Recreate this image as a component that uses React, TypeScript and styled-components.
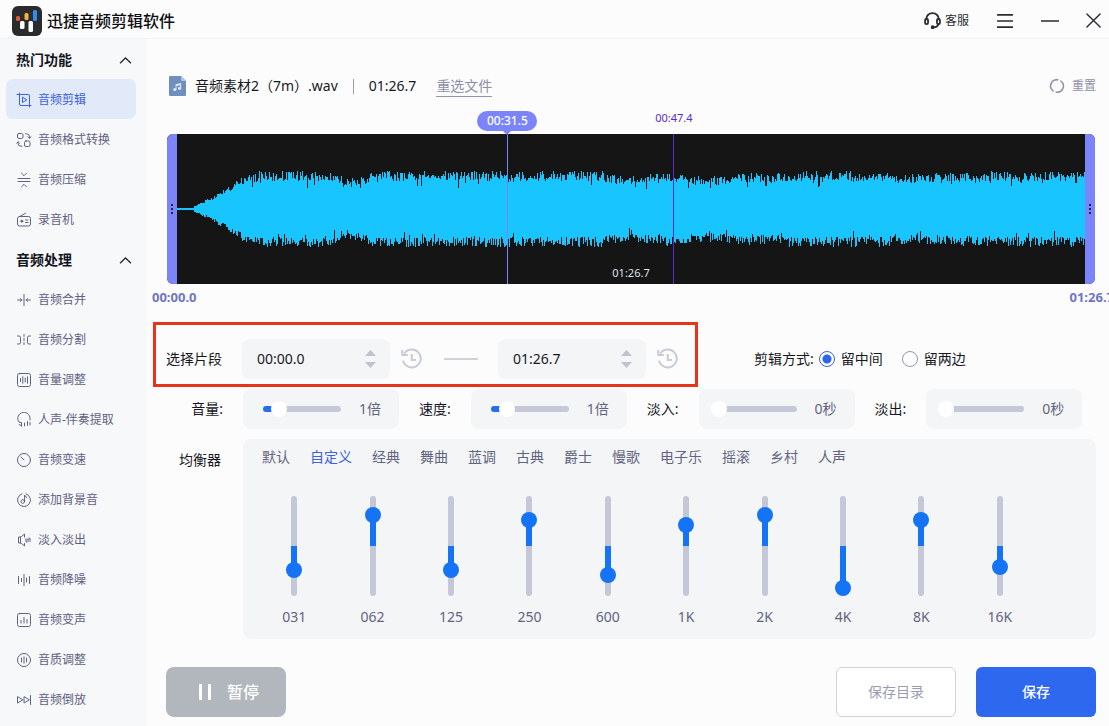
import React, { useState } from "react";
import styled, { createGlobalStyle, css } from "styled-components";

const GlobalStyle = createGlobalStyle`
  *, *::before, *::after { box-sizing: border-box; }
  body {
    margin: 0;
    background: #fcfcfc;
    color: #17181f;
    font-family: "Noto Sans", "Noto Sans CJK SC", sans-serif;
    font-size: 14px;
    line-height: 20px;
  }
  button, input { font: inherit; color: inherit; margin: 0; padding: 0; }
  button { border: 0; background: none; cursor: pointer; }
  h1, h2, ul, p { margin: 0; padding: 0; }
  ul { list-style: none; }
  svg { display: block; flex: none; }
`;

/* ---------- shell ---------- */

const Page = styled.div`
  min-height: 100vh;
  display: flex;
  flex-direction: column;
`;

const TitleBar = styled.header`
  height: 39px;
  padding: 3px 8px 0 12px;
  display: flex;
  align-items: center;
  border-bottom: 1px solid #f3f3f6;
`;

const AppName = styled.h1`
  margin-left: 5px;
  flex: 1;
  font-size: 16px;
  font-weight: 500;
  color: #0c0d12;
`;

const WindowActions = styled.div`
  display: flex;
  align-items: center;
  gap: 27px;
  color: #2a2b33;
`;

const WindowButton = styled.button`
  display: flex;
  align-items: center;
  gap: 4px;
  font-size: 12px;
`;

const Body = styled.div`
  flex: 1;
  display: flex;
`;

const Sidebar = styled.nav`
  width: 146px;
  flex: none;
  padding: 0 10px 0 6px;
  background: #f7f8fa;
`;

const GroupHeader = styled.button`
  width: 100%;
  height: 40px;
  padding: 2px 4px 0 10px;
  display: flex;
  align-items: center;
  justify-content: space-between;
  font-weight: 700;
  color: #14161f;
`;

const NavLink = styled.a<{ $active?: boolean }>`
  height: 40px;
  padding: 1px 0 0 10px;
  display: flex;
  align-items: center;
  gap: 6px;
  border-radius: 7px;
  font-size: 12px;
  text-decoration: none;
  color: ${(p) => (p.$active ? "#3a63dc" : "#5f6183")};
  background: ${(p) => (p.$active ? "#e2e9f8" : "transparent")};
`;

const Main = styled.main`
  flex: 1;
  min-width: 0;
  padding: 36px 13px 9px 20px;
  overflow: hidden;
`;

/* ---------- file row ---------- */

const FileRow = styled.div`
  display: flex;
  align-items: center;
  height: 22px;
  padding-left: 3px;
`;

const FileName = styled.span`
  margin-left: 9px;
`;

const Divider = styled.span`
  width: 1px;
  height: 15px;
  margin: 0 15px;
  background: #9b9cab;
`;

const ReselectLink = styled.a`
  margin-left: 20px;
  border-bottom: 1px solid #9395ad;
  color: #8d8fa9;
  text-decoration: none;
`;

const ResetButton = styled.button`
  margin-left: auto;
  display: flex;
  align-items: center;
  gap: 7px;
  font-size: 12px;
  color: #8f91a8;
`;

/* ---------- waveform ---------- */

const Editor = styled.section`
  margin: 14px 1px 0;
  padding-top: 23px;
  position: relative;
`;

const WaveFrame = styled.div`
  height: 150px;
  display: flex;
  border-radius: 6px;
  overflow: hidden;
  background: #151515;
`;

const TrimHandle = styled.button`
  width: 10px;
  flex: none;
  display: flex;
  flex-direction: column;
  align-items: center;
  justify-content: center;
  gap: 2px;
  background: #7b84f8;
`;

const HandleDot = styled.span`
  width: 2px;
  height: 2px;
  background: #23235a;
`;

const WaveArea = styled.div`
  flex: 1;
  min-width: 0;
`;

const Markers = styled.div`
  position: absolute;
  inset: 0 10px;
  pointer-events: none;
`;

const Marker = styled.div<{ $color: string }>`
  position: absolute;
  top: 0;
  bottom: 0;
  width: 1px;
  display: flex;
  flex-direction: column;
  align-items: center;
  color: ${(p) => p.$color};

  &::after {
    content: "";
    flex: 1;
    width: 1px;
    background: ${(p) => p.$color};
  }
`;

const PlayheadTag = styled.span`
  width: 60px;
  height: 20px;
  flex: none;
  border-radius: 10px;
  background: #7b84f8;
  color: #fff;
  font-size: 12px;
  font-weight: 500;
  text-align: center;
`;

const PlayheadTip = styled.span`
  border: 4px solid transparent;
  border-top-color: #7b84f8;
  border-bottom-width: 0;
`;

const HoverTag = styled.span`
  height: 23px;
  flex: none;
  font-size: 11px;
  line-height: 14px;
`;

const SelectionLength = styled.span`
  position: absolute;
  left: 50%;
  bottom: 2px;
  transform: translateX(-50%);
  font-size: 11px;
  line-height: 18px;
  color: #dfe1ea;
`;

const RangeLabels = styled.div`
  margin: 3px -18px 0 -14px;
  display: flex;
  justify-content: space-between;
  font-size: 13px;
  font-weight: 700;
  color: #6f76c4;
`;

/* ---------- segment row ---------- */

const SegmentRow = styled.div`
  margin-top: 15px;
  display: flex;
  align-items: center;
  gap: 56px;
`;

const SegmentBox = styled.div`
  margin-left: -13px;
  padding: 14px 17px 5px 10px;
  display: flex;
  align-items: center;
  flex: none;
  border: 3px solid #e8341a;
`;

const TimeField = styled.div`
  width: 148px;
  height: 40px;
  padding: 0 14px 0 15px;
  display: flex;
  align-items: center;
  justify-content: space-between;
  border-radius: 8px;
  background: #f4f5f7;
`;

const TimeInput = styled.input`
  width: 80px;
  border: 0;
  outline: 0;
  background: transparent;
`;

const Stepper = styled.div`
  display: flex;
  flex-direction: column;
  gap: 6px;
`;

const SegmentLabel = styled.label`
  margin-right: 20px;
`;

const HistoryButton = styled.button`
  margin-left: 11px;
  color: #c9cbd6;
`;

const Dash = styled.span`
  width: 34px;
  height: 2px;
  margin: 0 20px 0 22px;
  background: #d0d2da;
`;

const ModeGroup = styled.fieldset`
  margin: 0;
  padding: 8px 0 0;
  border: 0;
  display: flex;
  align-items: center;
  white-space: nowrap;
`;

const ModeTitle = styled.span`
  margin-right: 5px;
`;

const RadioLabel = styled.label`
  display: flex;
  align-items: center;
  gap: 6px;
  margin-right: 19px;
`;

const Radio = styled.input`
  appearance: none;
  width: 16px;
  height: 16px;
  border: 1px solid #9496b0;
  border-radius: 50%;
  background: #fff;

  &:checked {
    border-color: #3a63dc;
    background: radial-gradient(circle, #2b66ea 4px, #fff 5px);
  }
`;

/* ---------- sliders ---------- */

const ControlRow = styled.div`
  margin-top: 2px;
  display: flex;
  align-items: center;
  gap: 20px;
`;

const ControlLabel = styled.label<{ $lead?: boolean }>`
  flex: none;
  text-align: right;
  ${(p) => p.$lead && css`width: 57px;`}
`;

const SliderCard = styled.div`
  width: 156px;
  height: 40px;
  padding: 0 18px 0 12px;
  display: flex;
  align-items: center;
  justify-content: space-between;
  border-radius: 8px;
  background: #f4f5f7;
  color: #62647f;
`;

const SliderBox = styled.div`
  width: 86px;
  display: grid;
  align-items: center;

  & > * { grid-area: 1 / 1; }
`;

const Rail = styled.span`
  height: 6px;
  margin-left: 8px;
  border-radius: 3px;
`;

const HRange = styled.input`
  appearance: none;
  width: 100%;
  height: 16px;
  background: transparent;

  &::-webkit-slider-thumb {
    appearance: none;
    width: 16px;
    height: 16px;
    border-radius: 50%;
    background: #fff;
  }
`;

/* ---------- equalizer ---------- */

const EqRow = styled.section`
  margin-top: 10px;
  display: flex;
  gap: 20px;
`;

const EqTitle = styled.h2`
  width: 57px;
  flex: none;
  padding: 11px 2px 0 0;
  font-size: 14px;
  font-weight: 400;
  text-align: right;
`;

const EqPanel = styled.div`
  flex: 1;
  min-width: 0;
  padding: 8px 0 12px;
  border-radius: 8px;
  background: #f4f5f7;
`;

const PresetList = styled.div`
  padding-left: 19px;
  display: flex;
  gap: 20px;
`;

const Preset = styled.button<{ $active: boolean }>`
  flex: none;
  color: ${(p) => (p.$active ? "#3a63dc" : "#62647f")};
`;

const Bands = styled.div`
  margin-top: 29px;
  padding: 0 57px 0 12px;
  display: grid;
  grid-template-columns: repeat(10, 1fr);
`;

const Band = styled.label`
  display: flex;
  flex-direction: column;
  align-items: center;
  gap: 11px;
  color: #62647f;
`;

const BandSlider = styled.div`
  height: 100px;
  width: 16px;
  display: grid;
  justify-items: center;

  & > * { grid-area: 1 / 1; }
`;

const BandRail = styled.span`
  width: 6px;
  border-radius: 3px;
`;

const VRange = styled.input`
  appearance: none;
  writing-mode: vertical-lr;
  direction: rtl;
  width: 16px;
  height: 100px;
  background: transparent;

  &::-webkit-slider-thumb {
    appearance: none;
    width: 16px;
    height: 16px;
    border-radius: 50%;
    background: #1573f5;
  }
`;

/* ---------- footer ---------- */

const Footer = styled.footer`
  margin-top: 28px;
  display: flex;
  gap: 20px;
`;

const ActionButton = styled.button<{ $kind: "pause" | "outline" | "primary" }>`
  width: 120px;
  height: 50px;
  display: flex;
  align-items: center;
  justify-content: center;
  border-radius: 6px;
  ${(p) =>
    p.$kind === "pause" &&
    css`
      margin-right: auto;
      padding-left: 6px;
      gap: 16px;
      border-radius: 8px;
      background: #b2b7bd;
      color: #fff;
      font-size: 16px;
      font-weight: 500;
    `}
  ${(p) =>
    p.$kind === "outline" &&
    css`
      border: 1px solid #d0d2dc;
      background: #fff;
      color: #9a9cb3;
    `}
  ${(p) =>
    p.$kind === "primary" &&
    css`
      background: #2e68ef;
      color: #fff;
      font-weight: 500;
    `}
`;

/* ---------- icons ---------- */

const Icon = ({ children, size = 16, width = 1 }: { children: React.ReactNode; size?: number; width?: number }) => (
  <svg
    width={size}
    height={size}
    viewBox="0 0 16 16"
    fill="none"
    stroke="currentColor"
    strokeWidth={width}
    strokeLinecap="round"
    strokeLinejoin="round"
    aria-hidden="true"
  >
    {children}
  </svg>
);

const icons: Record<string, React.ReactNode> = {
  cut: <path d="M3.5 1v11a1.500 1.500 0 0 0 1.500 1.500H15M1 2.500h11a1.500 1.500 0 0 1 1.500 1.500V15M6.5 5.500v5l4-2.5z" />,
  convert: (
    <>
      <rect x="1.5" y="1.5" width="5.500" height="5" rx="1.5" />
      <rect x="8.5" y="9" width="5.500" height="5.500" rx="1.5" />
      <path d="M9.5 1.800h1a3 3 0 0 1 3 3v1.200M11.900 4.800l1.600 1.400 1.500-1.400M6 14.200H5a3 3 0 0 1-3-3V10M.7 11.200 2 9.800l1.500 1.400" />
    </>
  ),
  compress: <path d="M2 6.500h12M2 9.500h12M5.5 1.200 8 3.700l2.500-2.500M5.5 14.800 8 12.300l2.500 2.500" />,
  recorder: (
    <>
      <rect x="1.5" y="4.500" width="13" height="9.5" rx="2" />
      <path d="M4 4.300 9.500 1.300M9.5 8h2.5M9.5 10.500h2.5" />
      <circle cx="5.8" cy="9.2" r="1" fill="currentColor" />
    </>
  ),
  merge: <path d="M8 2.500v11M1.500 8H6M4.200 6.500 5.800 8 4.200 9.500M14.500 8H10M11.800 6.500 10.200 8l1.600 1.500" />,
  split: (
    <>
      <path d="M1.500 4H3a1.500 1.500 0 0 1 1.500 1.500v5A1.500 1.500 0 0 1 3 12H1.500M14.500 4H13a1.500 1.500 0 0 0-1.500 1.500v5A1.500 1.500 0 0 0 13 12h1.500" />
      <path d="M8 2.500v11" strokeDasharray="2 2" />
    </>
  ),
  volume: (
    <>
      <rect x="1.500" y="1.500" width="13" height="13" rx="2" />
      <path d="M4.500 6.500v3M6.800 4.800v6.500M9.200 6v4M11.500 4.800v6.500" />
    </>
  ),
  vocal: <path d="M5.500 14v-3.500L3 10.200A6.200 6.200 0 1 1 14 8M5.500 14 3.200 12.500M8.500 11v3M11.500 9.500v4M14 10.500v2.500" />,
  speed: (
    <>
      <circle cx="8" cy="8" r="6.500" />
      <path d="M8 8 5 5" />
    </>
  ),
  bgm: (
    <>
      <path d="M6 1.800a6.500 6.500 0 1 0 4 0" />
      <circle cx="6.800" cy="9.500" r="1.800" />
      <path d="M8.600 9.500V3q.5 2 2.200 2.500" />
    </>
  ),
  fade: (
    <>
      <path d="M4.500 5H2.500v6h2M4.500 5v6M5.500 4.500 8.500 2v3M5.500 11.500 8.500 14v-2.500" />
      <path d="M9.500 7.200h5L13 5.800M14.500 9h-5l1.500 1.400" />
    </>
  ),
  denoise: <path d="M2.500 4.500v7M5.500 6.500v3M8 2.500v11M10.500 6v4M13.500 4.500v7" />,
  voice: (
    <>
      <rect x="1.500" y="1.500" width="13" height="13" rx="2" />
      <path d="M5 8.500V11M8 5.500V11M11 7.500V11" />
    </>
  ),
  quality: (
    <>
      <circle cx="8" cy="8" r="6.500" />
      <path d="M5.500 6v4M8 4.800v6.400M10.500 6v4" />
    </>
  ),
  reverse: <path d="M1.500 5v6l5-3zM8 5v6l5-3zM14.500 3.500v9" />,
};

const LogoIcon = () => (
  <svg width="30" height="30" viewBox="0 0 30 30" aria-hidden="true">
    <rect width="30" height="30" rx="6" fill="#2b2b2e" />
    <rect x="4" y="10" width="4" height="5" rx="1.500" fill="#e4573d" />
    <rect x="8" y="15" width="4.500" height="8" rx="1.500" fill="#fff" />
    <rect x="12.500" y="7" width="4" height="7" rx="1.500" fill="#f0b23a" />
    <rect x="16.500" y="15" width="4.500" height="11" rx="1.500" fill="#fff" />
    <rect x="21" y="4" width="4" height="11" rx="1.500" fill="#2f8df0" />
  </svg>
);

const HeadsetIcon = () => (
  <Icon size={17} width={1.7}>
    <path d="M2.200 7V6.500a5.800 5.500 0 0 1 11.600 0V7M13.500 11.500c-.4 1.800-2 2.800-4.500 2.800" />
    <rect x="1" y="6.500" width="2.800" height="5" rx="1.300" />
    <rect x="12.200" y="6.500" width="2.800" height="5" rx="1.300" />
    <circle cx="8.200" cy="14.300" r="1" fill="currentColor" />
  </Icon>
);

const FileIcon = () => (
  <svg width="17" height="20" viewBox="0 0 17 20" aria-hidden="true">
    <path d="M1 0h11l5 5v14a1 1 0 0 1-1 1H1a1 1 0 0 1-1-1V1a1 1 0 0 1 1-1z" fill="#6f8fc0" />
    <path d="M12 0l5 5h-4a1 1 0 0 1-1-1z" fill="#b4c6e2" />
    <g fill="#dfe9f7">
      <circle cx="5.800" cy="13.500" r="1.600" />
      <circle cx="10.600" cy="12.300" r="1.600" />
      <path d="M6.600 8.300 12.200 7v5.300h-1V9.200l-3.700.9v3.400h-.9z" />
    </g>
  </svg>
);

const HistoryIcon = () => (
  <svg width="21" height="22" viewBox="0 0 21 22" fill="none" stroke="currentColor" strokeWidth="2" aria-hidden="true">
    <path d="M3.200 5.500A9 9 0 1 1 2 12.500M10.800 6v6H15" />
    <path d="M1.200 2v5h5.600" />
  </svg>
);

const Triangle = ({ down }: { down?: boolean }) => (
  <svg width="11" height="6" viewBox="0 0 11 6" aria-hidden="true">
    <path d={down ? "M0 0h11L5.500 6z" : "M0 6h11L5.500 0z"} fill="#bfc2cd" />
  </svg>
);

/* ---------- data ---------- */

const navGroups = [
  {
    title: "热门功能",
    items: [
      ["cut", "音频剪辑"],
      ["convert", "音频格式转换"],
      ["compress", "音频压缩"],
      ["recorder", "录音机"],
    ],
  },
  {
    title: "音频处理",
    items: [
      ["merge", "音频合并"],
      ["split", "音频分割"],
      ["volume", "音量调整"],
      ["vocal", "人声-伴奏提取"],
      ["speed", "音频变速"],
      ["bgm", "添加背景音"],
      ["fade", "淡入淡出"],
      ["denoise", "音频降噪"],
      ["voice", "音频变声"],
      ["quality", "音质调整"],
      ["reverse", "音频倒放"],
    ],
  },
];

const presets = ["默认", "自定义", "经典", "舞曲", "蓝调", "古典", "爵士", "慢歌", "电子乐", "摇滚", "乡村", "人声"];

const bands: [string, number][] = [
  ["031", -24],
  ["062", 31],
  ["125", -24],
  ["250", 26],
  ["600", -29],
  ["1K", 21],
  ["2K", 31],
  ["4K", -42],
  ["8K", 26],
  ["16K", -21],
];

const DURATION = 86.7;

const envelope = [
  [0, 1], [13, 1], [23, 6], [38, 14], [53, 24], [63, 31], [73, 36], [83, 38], [150, 38], [162, 34], [172, 31],
  [186, 33], [196, 38], [425, 38], [435, 34], [455, 33], [490, 37], [512, 34], [540, 33], [575, 37], [592, 35],
  [604, 38], [700, 38], [735, 35], [760, 36], [830, 38], [908, 38],
];

const levelAt = (x: number) => {
  const i = Math.max(1, envelope.findIndex(([px]) => px >= x));
  const [x0, y0] = envelope[i - 1];
  const [x1, y1] = envelope[i];
  return y0 + ((y1 - y0) * (x - x0)) / (x1 - x0);
};

const buildWave = () => {
  let seed = 20477;
  const rand = () => {
    seed = (seed * 1103515245 + 12345) % 2147483648;
    return seed / 2147483648;
  };
  const peak = (x: number) => {
    const level = levelAt(x);
    if (level < 3) return 1;
    const drop = rand() * 0.27 + (rand() > 0.91 ? 0.22 * rand() : 0);
    return Math.max(1, Math.round(level * (1 - drop)));
  };
  let d = "";
  for (let x = 0; x < 908; x++) {
    const up = peak(x);
    const down = peak(x);
    d += `M${x} ${75 - up}h1v${up + down}h-1z`;
  }
  return d;
};

const wavePath = buildWave();

/* ---------- parts ---------- */

const NumberField = ({ id, label, initial }: { id: string; label: string; initial: string }) => {
  const [value, setValue] = useState(initial);
  return (
    <>
      <TimeField>
        <TimeInput id={id} aria-label={label} value={value} onChange={(e) => setValue(e.target.value)} />
        <Stepper>
          <WindowButton aria-label="增加"><Triangle /></WindowButton>
          <WindowButton aria-label="减少"><Triangle down /></WindowButton>
        </Stepper>
      </TimeField>
      <HistoryButton aria-label="恢复"><HistoryIcon /></HistoryButton>
    </>
  );
};

const SliderControl = ({ id, label, initial, text, lead }: { id: string; label: string; initial: number; text: string; lead?: boolean }) => {
  const [value, setValue] = useState(initial);
  return (
    <>
      <ControlLabel htmlFor={id} $lead={lead}>{label}:</ControlLabel>
      <SliderCard>
        <SliderBox>
          <Rail style={{ background: `linear-gradient(to right, #2470e8 ${value * 0.9}%, #c5c8d8 ${value * 0.9}%)` }} />
          <HRange id={id} type="range" min={0} max={100} value={value} onChange={(e) => setValue(+e.target.value)} />
        </SliderBox>
        <span>{text}</span>
      </SliderCard>
    </>
  );
};

const BandControl = ({ name, initial }: { name: string; initial: number }) => {
  const [value, setValue] = useState(initial);
  const from = Math.min(50, 50 - value);
  const to = Math.max(50, 50 - value);
  return (
    <Band>
      <BandSlider>
        <BandRail
          style={{ background: `linear-gradient(#c3c7d6 ${from}%, #1573f5 ${from}%, #1573f5 ${to}%, #c3c7d6 ${to}%)` }}
        />
        <VRange type="range" min={-42} max={42} value={value} onChange={(e) => setValue(+e.target.value)} />
      </BandSlider>
      {name}
    </Band>
  );
};

export default function App() {
  const [preset, setPreset] = useState("自定义");
  const [mode, setMode] = useState("middle");

  return (
    <Page>
      <GlobalStyle />
      <TitleBar>
        <LogoIcon />
        <AppName>迅捷音频剪辑软件</AppName>
        <WindowActions>
          <WindowButton><HeadsetIcon />客服</WindowButton>
          <WindowButton aria-label="菜单">
            <Icon size={18} width={1.5}><path d="M1.500 2.500h13M1.500 8h13M1.500 13.500h13" /></Icon>
          </WindowButton>
          <WindowButton aria-label="最小化">
            <Icon size={18} width={1.5}><path d="M.5 8h15" /></Icon>
          </WindowButton>
          <WindowButton aria-label="关闭">
            <Icon size={15} width={1.5}><path d="M1 1l14 14M15 1 1 15" /></Icon>
          </WindowButton>
        </WindowActions>
      </TitleBar>

      <Body>
        <Sidebar>
          {navGroups.map((group) => (
            <React.Fragment key={group.title}>
              <GroupHeader>
                {group.title}
                <svg width="13" height="7" viewBox="0 0 13 7" fill="none" stroke="#2a2b33" strokeWidth="1.300" aria-hidden="true">
                  <path d="M1 6.300 6.500 1 12 6.300" />
                </svg>
              </GroupHeader>
              <ul>
                {group.items.map(([icon, name]) => (
                  <li key={icon}>
                    <NavLink href="#" $active={icon === "cut"}>
                      <Icon>{icons[icon]}</Icon>
                      {name}
                    </NavLink>
                  </li>
                ))}
              </ul>
            </React.Fragment>
          ))}
        </Sidebar>

        <Main>
          <FileRow>
            <FileIcon />
            <FileName>音频素材2（7m）.wav</FileName>
            <Divider />
            <span>01:26.7</span>
            <ReselectLink href="#">重选文件</ReselectLink>
            <ResetButton>
              <Icon width={1.5}>
                <path d="M4.200 13A6.200 6.200 0 0 1 8.800 1.850M11.800 3A6.200 6.200 0 0 1 7.200 14.150M6.500 2.100l2.300-.25M9.500 13.900l-2.300.25" />
              </Icon>
              重置
            </ResetButton>
          </FileRow>

          <Editor>
            <WaveFrame>
              <TrimHandle aria-label="起点"><HandleDot /><HandleDot /><HandleDot /></TrimHandle>
              <WaveArea>
                <svg width="100%" height="150" viewBox="0 0 908 150" preserveAspectRatio="none" aria-hidden="true">
                  <path d={wavePath} fill="#18c5ff" shapeRendering="crispEdges" />
                </svg>
              </WaveArea>
              <TrimHandle aria-label="终点"><HandleDot /><HandleDot /><HandleDot /></TrimHandle>
            </WaveFrame>
            <Markers>
              <Marker $color="#7b84f8" style={{ left: `${(31.5 / DURATION) * 100}%` }}>
                <PlayheadTag>00:31.5</PlayheadTag>
                <PlayheadTip />
              </Marker>
              <Marker $color="#5b2ad0" style={{ left: `${(47.4 / DURATION) * 100}%` }}>
                <HoverTag>00:47.4</HoverTag>
              </Marker>
              <SelectionLength>01:26.7</SelectionLength>
            </Markers>
          </Editor>
          <RangeLabels>
            <span>00:00.0</span>
            <span>01:26.7</span>
          </RangeLabels>

          <SegmentRow>
            <SegmentBox>
              <SegmentLabel htmlFor="start">选择片段</SegmentLabel>
              <NumberField id="start" label="开始时间" initial="00:00.0" />
              <Dash />
              <NumberField id="end" label="结束时间" initial="01:26.7" />
            </SegmentBox>
            <ModeGroup>
              <ModeTitle>剪辑方式:</ModeTitle>
              <RadioLabel>
                <Radio type="radio" name="mode" checked={mode === "middle"} onChange={() => setMode("middle")} />
                留中间
              </RadioLabel>
              <RadioLabel>
                <Radio type="radio" name="mode" checked={mode === "sides"} onChange={() => setMode("sides")} />
                留两边
              </RadioLabel>
            </ModeGroup>
          </SegmentRow>

          <ControlRow>
            <SliderControl id="volume" label="音量" initial={23} text="1倍" lead />
            <SliderControl id="speed" label="速度" initial={23} text="1倍" />
            <SliderControl id="fade-in" label="淡入" initial={0} text="0秒" />
            <SliderControl id="fade-out" label="淡出" initial={0} text="0秒" />
          </ControlRow>

          <EqRow>
            <EqTitle>均衡器</EqTitle>
            <EqPanel>
              <PresetList>
                {presets.map((name) => (
                  <Preset key={name} $active={name === preset} onClick={() => setPreset(name)}>
                    {name}
                  </Preset>
                ))}
              </PresetList>
              <Bands>
                {bands.map(([name, value]) => (
                  <BandControl key={name} name={name} initial={value} />
                ))}
              </Bands>
            </EqPanel>
          </EqRow>

          <Footer>
            <ActionButton $kind="pause">
              <svg width="12" height="16" viewBox="0 0 12 16" fill="#fff" aria-hidden="true">
                <rect x="0" width="3" height="16" rx="1" />
                <rect x="9" width="3" height="16" rx="1" />
              </svg>
              暂停
            </ActionButton>
            <ActionButton $kind="outline">保存目录</ActionButton>
            <ActionButton $kind="primary">保存</ActionButton>
          </Footer>
        </Main>
      </Body>
    </Page>
  );
}
